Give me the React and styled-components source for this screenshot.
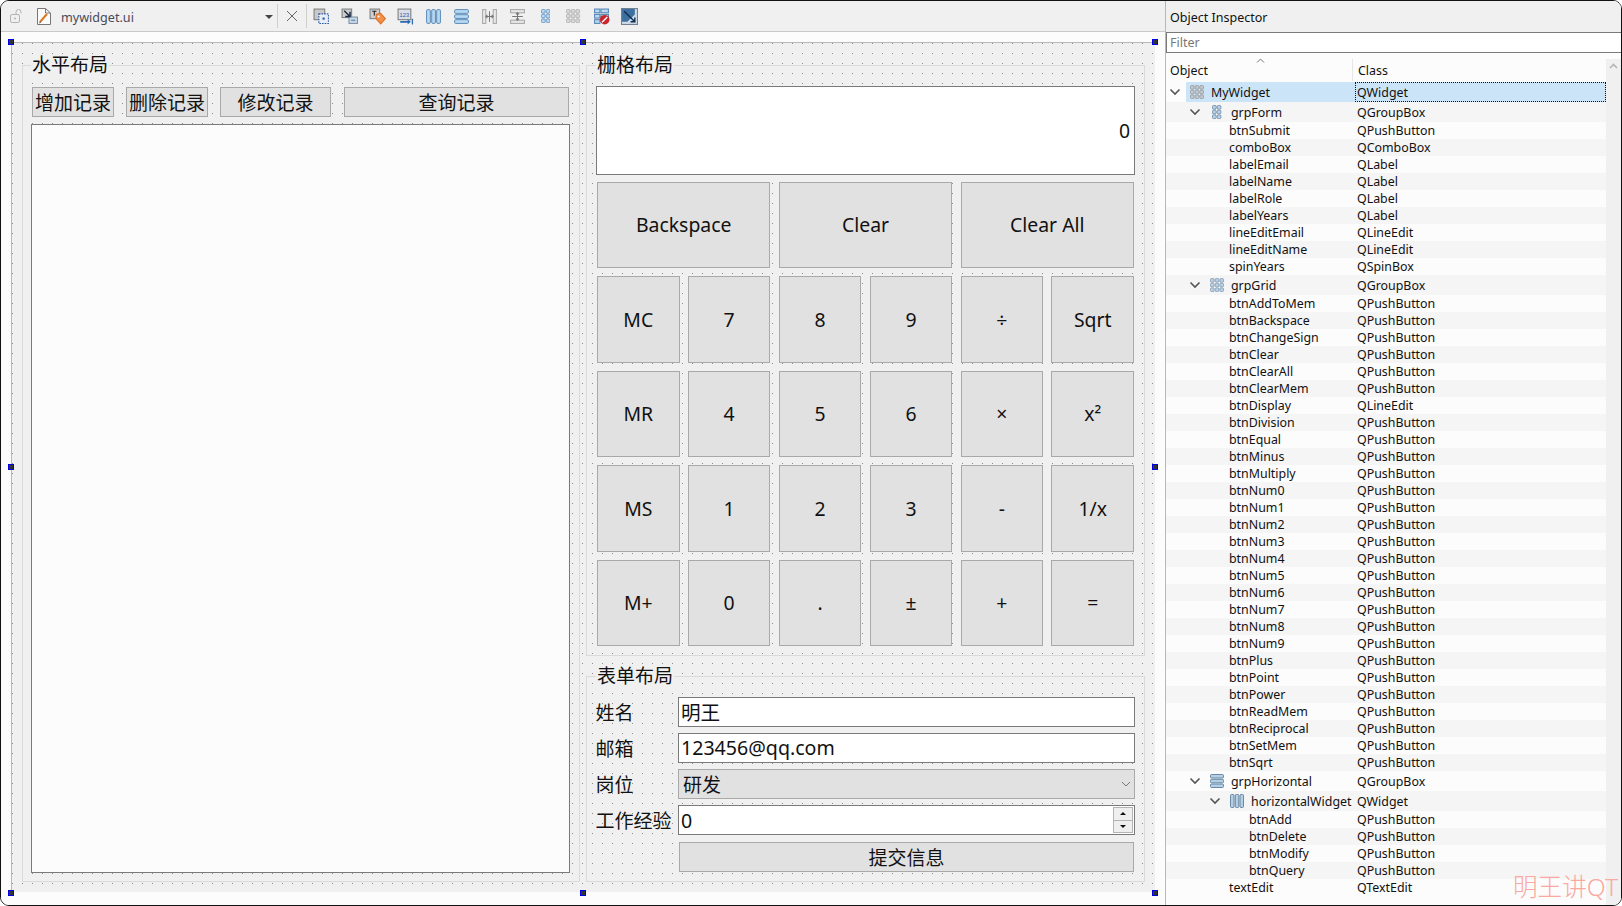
import React from "react"
import styled, { createGlobalStyle } from "styled-components"

const sans = `"Noto Sans", "Noto Sans CJK SC", sans-serif`

const GlobalStyle = createGlobalStyle`
  html, body {
    margin: 0;
    width: 1622px;
    height: 906px;
    overflow: hidden;
    background: #fff;
  }
  * {
    box-sizing: border-box;
  }
`

const Window = styled.div`
  position: relative;
  display: flex;
  width: 1622px;
  height: 906px;
  border: 1px solid #111;
  border-radius: 9px;
  overflow: hidden;
  background: #fcfcfc;
  font-family: ${sans};
  color: #111;
`

const Designer = styled.div`
  display: flex;
  flex-direction: column;
  width: 1164px;
`

const Toolbar = styled.div`
  display: flex;
  align-items: center;
  height: 31px;
  padding-left: 9px;
  background: #f0f0f0;
  border-bottom: 1px solid #c9c9c9;
  flex-shrink: 0;
`

const FileName = styled.div`
  display: flex;
  align-items: center;
  justify-content: space-between;
  width: 212px;
  margin: 0 1px 0 10px;
  padding-top: 3px;
  font-size: 12.6px;
  color: #4a4a5a;
`

const ComboArrow = styled.span`
  width: 0;
  height: 0;
  margin-top: -2px;
  border-left: 4px solid transparent;
  border-right: 4px solid transparent;
  border-top: 4px solid #444;
`

const ToolSep = styled.span`
  width: 1px;
  height: 24px;
  background: #cfcfcf;
  margin: 0 ${(p) => p.$after}px 0 ${(p) => p.$before}px;
`

const ToolIcons = styled.div`
  display: flex;
  gap: 11px;
`

const ToolSlot = styled.span`
  display: flex;
  align-items: center;
  justify-content: center;
  width: 17px;
  height: 17px;
`

const Canvas = styled.div`
  flex: 1;
  padding: 10px 0 0 10px;
  background: #fcfcfc;
`

const Form = styled.div`
  position: relative;
  display: flex;
  gap: 6px;
  width: 1144px;
  height: 850px;
  padding: 22px 10px 11px 10px;
  border-top: 1px solid #b8b8b8;
  border-left: 1px solid #b8b8b8;
  background-color: #f0f0f0;
  background-image: radial-gradient(circle at 0.5px 0.5px, #8c8c8c 0.5px, transparent 0.6px);
  background-size: 10px 10px;
`

const Handle = styled.span`
  position: absolute;
  left: ${(p) => p.$x}px;
  top: ${(p) => p.$y}px;
  width: 6px;
  height: 6px;
  background: #333;
  border: 1px solid #0000e6;
`

const GroupBox = styled.div`
  display: flex;
  flex-direction: column;
  width: ${(p) => p.$w}px;
  height: ${(p) => p.$h}px;
  flex-shrink: 0;
  border: 1px solid #dadada;
  padding: 0 9px;
`

const GroupTitle = styled.div`
  align-self: flex-start;
  height: 22px;
  margin: -12px 0 ${(p) => p.$gap}px ${(p) => p.$left || 0}px;
  padding: 0 1px;
  background: #f0f0f0;
  font-size: 19px;
  line-height: 22px;
  white-space: nowrap;
`

const RightColumn = styled.div`
  display: flex;
  flex-direction: column;
  gap: 20px;
`

const PushButton = styled.button`
  display: block;
  margin: 0;
  padding: 0 0 1px;
  width: ${(p) => (p.$w ? `${p.$w}px` : "auto")};
  height: ${(p) => (p.$h ? `${p.$h}px` : "auto")};
  border: 1px solid #a9a9a9;
  border-radius: 0;
  background: #e1e1e1;
  font-family: ${sans};
  font-size: 19.4px;
  color: #111;
  white-space: nowrap;
  grid-column: span ${(p) => p.$span || 1};
`

const RecordButton = styled(PushButton)`
  font-size: 19px;
  margin-left: ${(p) => p.$offset || 0}px;
`

const ButtonRow = styled.div`
  display: flex;
  gap: 12px;
  margin-bottom: 7px;
`

const TextEdit = styled.div`
  width: 539px;
  height: 749px;
  margin-left: -1px;
  border: 1px solid #7a7a7a;
  background: #fcfcfc;
`

const CalcGrid = styled.div`
  display: grid;
  grid-template-columns: repeat(6, 1fr);
  grid-template-rows: 88px 86px 87px 86px 87px 86px;
  column-gap: 8.4px;
  row-gap: 8px;
  padding: 0 1px;
`

const Display = styled.div`
  grid-column: 1 / -1;
  margin: 0 -1px -1px;
  display: flex;
  align-items: center;
  justify-content: flex-end;
  padding-right: 4px;
  border: 1px solid #7a7a7a;
  background: #fff;
  font-size: 19.4px;
`

const FormGrid = styled.div`
  display: grid;
  grid-template-columns: 82px 1fr;
  grid-auto-rows: 30px;
  row-gap: 6px;
`

const FieldLabel = styled.div`
  display: flex;
  align-items: center;
  margin-left: -0.5px;
  font-size: 19px;
  white-space: nowrap;
`

const LineEdit = styled.div`
  display: flex;
  align-items: center;
  justify-content: space-between;
  padding-left: 2px;
  padding-bottom: ${(p) => p.$lift || 0}px;
  border: 1px solid #7a7a7a;
  background: #fff;
  font-size: 19.6px;
`

const ComboBox = styled.div`
  display: flex;
  align-items: center;
  justify-content: space-between;
  padding: 0 3px 1px 4px;
  border: 1px solid #a9a9a9;
  background: #e1e1e1;
  font-size: 19px;
`

const SpinButtons = styled.div`
  display: flex;
  flex-direction: column;
  width: 20px;
  height: 26px;
  margin-right: 1px;
  border: 1px solid #b4b4b4;
`

const SpinButton = styled.span`
  flex: 1;
  display: flex;
  align-items: center;
  justify-content: center;
  background: #efefef;
  border-top: ${(p) => (p.$down ? "1px solid #b4b4b4" : "none")};

  &::before {
    content: "";
    border-left: 3px solid transparent;
    border-right: 3px solid transparent;
    border-top: ${(p) => (p.$down ? "3px solid #111" : "none")};
    border-bottom: ${(p) => (p.$down ? "none" : "3px solid #111")};
  }
`

const SubmitButton = styled(PushButton)`
  grid-column: 2;
  height: 30px;
  margin: 1px 1px 0;
  padding: 0;
  font-size: 19px;
`

const Inspector = styled.div`
  flex: 1;
  display: flex;
  flex-direction: column;
  border-left: 1px solid #b8b8b8;
  background: #fcfcfc;
`

const InspectorTitle = styled.div`
  display: flex;
  align-items: center;
  height: 31px;
  padding: 2px 0 0 4px;
  background: #f0f0f0;
  font-size: 12.5px;
`

const Filter = styled.div`
  display: flex;
  align-items: center;
  height: 21px;
  padding-left: 3px;
  border: 1px solid #7a7a7a;
  border-right: none;
  background: #fff;
  color: #777;
  font-size: 12.5px;
`

const TreeArea = styled.div`
  flex: 1;
  display: flex;
  padding-top: 6px;
`

const Tree = styled.div`
  width: 440px;
  font-size: 12.4px;
`

const HeaderRow = styled.div`
  position: relative;
  display: flex;
  align-items: center;
  height: 23px;
  padding-bottom: 1px;
`

const HeaderCell = styled.div`
  width: ${(p) => p.$w}px;
  height: 100%;
  display: flex;
  align-items: center;
  padding-left: ${(p) => p.$pad}px;
  border-right: ${(p) => (p.$line ? "1px solid #e6e6e6" : "none")};
`

const SortMark = styled.svg`
  position: absolute;
  left: 90px;
  top: -1px;
`

const Row = styled.div`
  display: flex;
  align-items: center;
  height: ${(p) => (p.$tall ? 20 : 17)}px;
  padding-bottom: ${(p) => (p.$tall ? 0 : 1)}px;
  white-space: nowrap;
  background: ${(p) =>
    p.$selected
      ? "linear-gradient(to right, #fcfcfc 20px, #cce4f7 20px)"
      : p.$alt
      ? "#f5f5f5"
      : "#fcfcfc"};
`

const ObjectCell = styled.div`
  display: flex;
  align-items: center;
  width: 187px;
  flex-shrink: 0;
  padding-left: ${(p) => p.$pad}px;
`

const ClassCell = styled.div`
  flex: 1;
  align-self: stretch;
  display: flex;
  align-items: center;
  margin-left: 2px;
  padding-left: 2px;
  outline: ${(p) => (p.$focus ? "1px dotted #111" : "none")};
  outline-offset: -1px;
`

const Chevron = styled.svg`
  width: 12px;
  flex-shrink: 0;
  margin-right: 9px;
`

const TreeIcon = styled.span`
  display: flex;
  justify-content: center;
  width: 14px;
  margin-right: 7px;
  flex-shrink: 0;
`

const Scrollbar = styled.div`
  flex: 1;
  display: flex;
  justify-content: center;
  padding-top: 4px;
  background: #f0f0f0;
`

const Watermark = styled.div`
  position: absolute;
  right: 3px;
  bottom: 3px;
  font-size: 24.6px;
  font-weight: 300;
  line-height: 30px;
  color: #fba8a0;
  white-space: nowrap;
`

/* toolbar + tree icons */
const DotGrid = ({ cols, rows, color, stroke }) => (
  <svg width={cols * 4.7} height={14} viewBox={`0 0 ${cols * 4.7} 14`}>
    {Array.from({ length: rows * cols }).map((_, i) => (
      <rect
        key={i}
        x={(i % cols) * 4.7 + 0.5}
        y={Math.floor(i / cols) * 4.7 + 0.5}
        width={3.7}
        height={3.7}
        rx={1}
        fill={color}
        stroke={stroke}
        strokeWidth={0.7}
      />
    ))}
  </svg>
)

const HBars = () => (
  <svg width="14" height="14" viewBox="0 0 14 14">
    {[0.5, 5.3, 10].map((y) => (
      <rect key={y} x="0.5" y={y} width="13" height="3.5" rx="1" fill="#b5cfe6" stroke="#5f7f9c" strokeWidth="0.9" />
    ))}
  </svg>
)

const VBars = () => (
  <svg width="14" height="14" viewBox="0 0 14 14">
    {[0.5, 5.3, 10].map((x) => (
      <rect key={x} x={x} y="0.5" width="3.5" height="13" rx="1" fill="#b5cfe6" stroke="#5f7f9c" strokeWidth="0.9" />
    ))}
  </svg>
)

const Tool = ({ children }) => (
  <svg width="17" height="17" viewBox="0 0 16 16">
    {children}
  </svg>
)

const EditWidgetsIcon = () => (
  <Tool>
    <rect x="1" y="1" width="10" height="10" fill="#c9c9c9" stroke="#7d7d7d" />
    <rect x="5.5" y="5.5" width="9" height="9" fill="#e8eef6" stroke="#2c54a8" strokeDasharray="1.5 1" />
    <rect x="9" y="9" width="2" height="2" fill="#2c54a8" />
  </Tool>
)

const SignalsIcon = () => (
  <Tool>
    <rect x="1" y="1" width="9" height="8" fill="#cfcfcf" stroke="#7d7d7d" />
    <rect x="7.5" y="8.5" width="8" height="6" fill="#c9d9ea" stroke="#7f8fa5" />
    <path d="M3 2.5 L8 7.5 M8.5 3.5 V8 H4" fill="none" stroke="#1c2c48" strokeWidth="1.4" />
    <path d="M9.5 11.5 H13.5" stroke="#5079a8" />
  </Tool>
)

const BuddyIcon = () => (
  <Tool>
    <rect x="1" y="1" width="9" height="9" fill="#cfcfcf" stroke="#7d7d7d" />
    <path d="M3 3 H7 M5 3 V7" stroke="#222" />
    <path d="M7 6 L11 5 L15.5 10 L11 15 L6.5 10 Z" fill="#f29145" stroke="#d9702a" />
    <circle cx="9" cy="8" r="1" fill="#fff" />
  </Tool>
)

const TabOrderIcon = () => (
  <Tool>
    <rect x="1" y="1" width="12" height="10" fill="#d8dfe8" stroke="#7d7d7d" />
    <text x="2.4" y="8" fontSize="5.4" fontFamily="Liberation Sans" fill="#2c54a8">
      123
    </text>
    <path d="M3 13 H12" stroke="#2c6ab0" strokeWidth="1.6" />
    <path d="M10 10.5 L13 13 L10 15.5 Z" fill="#2c6ab0" />
    <path d="M14.5 10 V15.5" stroke="#2c6ab0" strokeWidth="1.2" />
  </Tool>
)

const HLayoutIcon = () => (
  <Tool>
    <g transform="translate(1 1)">
      {[0.5, 5.3, 10].map((x) => (
        <rect key={x} x={x} y="0.5" width="3.5" height="13" rx="1" fill="#b9d8f2" stroke="#5586b4" strokeWidth="0.9" />
      ))}
    </g>
  </Tool>
)

const VLayoutIcon = () => (
  <Tool>
    <g transform="translate(1 1)">
      {[0.5, 5.3, 10].map((y) => (
        <rect key={y} x="0.5" y={y} width="13" height="3.5" rx="1" fill="#b9d8f2" stroke="#5586b4" strokeWidth="0.9" />
      ))}
    </g>
  </Tool>
)

const HSplitIcon = () => (
  <Tool>
    <rect x="1.5" y="1.5" width="3" height="13" fill="#e8e8e8" stroke="#a8a8a8" />
    <rect x="11.5" y="1.5" width="3" height="13" fill="#e8e8e8" stroke="#a8a8a8" />
    <path d="M8 3 V13 M5.5 8 H10.5 M6 6.5 L4.5 8 L6 9.5 M10 6.5 L11.5 8 L10 9.5" fill="none" stroke="#777" />
  </Tool>
)

const VSplitIcon = () => (
  <Tool>
    <rect x="1.5" y="1.5" width="13" height="3" fill="#e8e8e8" stroke="#a8a8a8" />
    <rect x="1.5" y="11.5" width="13" height="3" fill="#e8e8e8" stroke="#a8a8a8" />
    <path d="M3 8 H13 M8 5.5 V10.5 M6.5 6 L8 4.5 L9.5 6 M6.5 10 L8 11.5 L9.5 10" fill="none" stroke="#777" />
  </Tool>
)

const BreakLayoutIcon = () => (
  <Tool>
    <rect x="1.5" y="1" width="5" height="3.5" fill="#b9d8f2" stroke="#5586b4" />
    <rect x="7.5" y="1" width="7" height="3.5" fill="#b9d8f2" stroke="#5586b4" />
    <rect x="1.5" y="6" width="5" height="3.5" fill="#b9d8f2" stroke="#5586b4" />
    <rect x="7.5" y="6" width="7" height="3.5" fill="#b9d8f2" stroke="#5586b4" />
    <rect x="1.5" y="11" width="5" height="3.5" fill="#b9d8f2" stroke="#5586b4" />
    <circle cx="11" cy="11" r="4.5" fill="#c8262a" />
    <path d="M8.5 13.5 L13.5 8.5" stroke="#fff" strokeWidth="1.3" />
  </Tool>
)

const AdjustSizeIcon = () => (
  <Tool>
    <rect x="0.5" y="0.5" width="15" height="15" fill="#cfdbe6" stroke="#6f8090" />
    <path d="M1 1 H13 V6 L6 13 H1 Z" fill="#3d6f9f" />
    <path d="M3 3 L13 13 M9 13 H13 V9" fill="none" stroke="#0d2c50" strokeWidth="1.3" />
  </Tool>
)

const LockIcon = () => (
  <svg width="12" height="14" viewBox="0 0 12 14">
    <rect x="0.5" y="5.5" width="9" height="8" rx="1.5" fill="none" stroke="#b5b5b5" />
    <circle cx="5" cy="9.5" r="1" fill="#b5b5b5" />
    <path d="M6 5.5 V3 A2.5 2.5 0 0 1 11 3 V4.5" fill="none" stroke="#b5b5b5" />
  </svg>
)

const DocIcon = () => (
  <svg width="14" height="17" viewBox="0 0 14 17" style={{ marginLeft: 15 }}>
    <path d="M0.5 0.5 H8.5 L13.5 5 V16.5 H0.5 Z" fill="#fbfbfb" stroke="#777" />
    <path d="M8.5 0.5 V5 H13.5" fill="none" stroke="#777" />
    <path d="M3 14 L10 6" stroke="#d97a25" strokeWidth="2" />
    <path d="M2 15.5 L3 13.5 L4 14.5 Z" fill="#444" />
  </svg>
)

const CloseIcon = () => (
  <svg width="12" height="12" viewBox="0 0 12 12">
    <path d="M1 1 L11 11 M11 1 L1 11" stroke="#666" strokeWidth="1" />
  </svg>
)

const ChevronDown = ({ color = "#555", width = 1.6 }) => (
  <Chevron height="8" viewBox="0 0 12 8">
    <path d="M1.5 1.5 L6 6 L10.5 1.5" fill="none" stroke={color} strokeWidth={width} />
  </Chevron>
)

const treeIcons = {
  grid3: <DotGrid cols={3} rows={3} color="#c4c8cc" stroke="#8d9499" />,
  grid2: <DotGrid cols={2} rows={3} color="#b9d0e6" stroke="#5e7f9e" />,
  grid3blue: <DotGrid cols={3} rows={3} color="#b9d0e6" stroke="#7b93a8" />,
  hbars: <HBars />,
  vbars: <VBars />,
}

const nums = Array.from({ length: 10 }, (_, i) => [`btnNum${i}`, "QPushButton"])
const push = (names) => names.map((n) => [n, "QPushButton"])

const treeRows = [
  { name: "MyWidget", cls: "QWidget", depth: 0, icon: "grid3", selected: true },
  { name: "grpForm", cls: "QGroupBox", depth: 1, icon: "grid2" },
  ...[
    ["btnSubmit", "QPushButton"],
    ["comboBox", "QComboBox"],
    ["labelEmail", "QLabel"],
    ["labelName", "QLabel"],
    ["labelRole", "QLabel"],
    ["labelYears", "QLabel"],
    ["lineEditEmail", "QLineEdit"],
    ["lineEditName", "QLineEdit"],
    ["spinYears", "QSpinBox"],
  ].map(([name, cls]) => ({ name, cls, depth: 1 })),
  { name: "grpGrid", cls: "QGroupBox", depth: 1, icon: "grid3blue" },
  ...[
    ...push(["btnAddToMem", "btnBackspace", "btnChangeSign", "btnClear", "btnClearAll", "btnClearMem"]),
    ["btnDisplay", "QLineEdit"],
    ...push(["btnDivision", "btnEqual", "btnMinus", "btnMultiply"]),
    ...nums,
    ...push(["btnPlus", "btnPoint", "btnPower", "btnReadMem", "btnReciprocal", "btnSetMem", "btnSqrt"]),
  ].map(([name, cls]) => ({ name, cls, depth: 1 })),
  { name: "grpHorizontal", cls: "QGroupBox", depth: 1, icon: "hbars" },
  { name: "horizontalWidget", cls: "QWidget", depth: 2, icon: "vbars" },
  ...push(["btnAdd", "btnDelete", "btnModify", "btnQuery"]).map(([name, cls]) => ({ name, cls, depth: 2 })),
  { name: "textEdit", cls: "QTextEdit", depth: 1 },
]

const calcKeys = [
  "MC", "7", "8", "9", "÷", "Sqrt",
  "MR", "4", "5", "6", "×", "x²",
  "MS", "1", "2", "3", "-", "1/x",
  "M+", "0", ".", "±", "+", "=",
]

const TreeRow = ({ row, index }) => {
  const tall = !!row.icon
  return (
    <Row $tall={tall} $alt={index % 2 === 1} $selected={row.selected}>
      <ObjectCell $pad={tall ? 3 + row.depth * 20 : 43 + row.depth * 20}>
        {tall && <ChevronDown />}
        {tall && <TreeIcon>{treeIcons[row.icon]}</TreeIcon>}
        {row.name}
      </ObjectCell>
      <ClassCell $focus={row.selected}>{row.cls}</ClassCell>
    </Row>
  )
}

const App = () => (
  <Window>
    <GlobalStyle />
    <Designer>
      <Toolbar>
        <LockIcon />
        <DocIcon />
        <FileName>
          mywidget.ui
          <ComboArrow />
        </FileName>
        <ToolSep $before={3} $after={8} />
        <CloseIcon />
        <ToolSep $before={8} $after={6} />
        <ToolIcons>
          <EditWidgetsIcon />
          <SignalsIcon />
          <BuddyIcon />
          <TabOrderIcon />
          <HLayoutIcon />
          <VLayoutIcon />
          <HSplitIcon />
          <VSplitIcon />
          <ToolSlot>
            <DotGrid cols={2} rows={3} color="#b9d8f2" stroke="#5586b4" />
          </ToolSlot>
          <ToolSlot>
            <DotGrid cols={3} rows={3} color="#d8d8d8" stroke="#a8a8a8" />
          </ToolSlot>
          <BreakLayoutIcon />
          <AdjustSizeIcon />
        </ToolIcons>
      </Toolbar>
      <Canvas>
        <Form>
          <Handle $x={-4} $y={-4} />
          <Handle $x={568} $y={-4} />
          <Handle $x={1140} $y={-4} />
          <Handle $x={-4} $y={421} />
          <Handle $x={1140} $y={421} />
          <Handle $x={-4} $y={847} />
          <Handle $x={568} $y={847} />
          <Handle $x={1140} $y={847} />

          <GroupBox $w={558} $h={817}>
            <GroupTitle $gap={11} $left={-1}>水平布局</GroupTitle>
            <ButtonRow>
              <RecordButton $w={82} $h={30}>增加记录</RecordButton>
              <RecordButton $w={82} $h={30}>删除记录</RecordButton>
              <RecordButton $w={111} $h={30}>修改记录</RecordButton>
              <RecordButton $w={225} $h={30} $offset={1}>查询记录</RecordButton>
            </ButtonRow>
            <TextEdit />
          </GroupBox>

          <RightColumn>
            <GroupBox $w={559} $h={591}>
              <GroupTitle $gap={10}>栅格布局</GroupTitle>
              <CalcGrid>
                <Display>0</Display>
                <PushButton $span={2}>Backspace</PushButton>
                <PushButton $span={2}>Clear</PushButton>
                <PushButton $span={2}>Clear All</PushButton>
                {calcKeys.map((k) => (
                  <PushButton key={k}>{k}</PushButton>
                ))}
              </CalcGrid>
            </GroupBox>
            <GroupBox $w={559} $h={206}>
              <GroupTitle $gap={10}>表单布局</GroupTitle>
              <FormGrid>
                <FieldLabel>姓名</FieldLabel>
                <LineEdit $lift={2}>明王</LineEdit>
                <FieldLabel>邮箱</FieldLabel>
                <LineEdit $lift={2}>123456@qq.com</LineEdit>
                <FieldLabel>岗位</FieldLabel>
                <ComboBox>
                  研发
                  <svg width="10" height="6" viewBox="0 0 10 6">
                    <path d="M1 1 L5 5 L9 1" fill="none" stroke="#777" />
                  </svg>
                </ComboBox>
                <FieldLabel>工作经验</FieldLabel>
                <LineEdit>
                  0
                  <SpinButtons>
                    <SpinButton />
                    <SpinButton $down />
                  </SpinButtons>
                </LineEdit>
                <SubmitButton>提交信息</SubmitButton>
              </FormGrid>
            </GroupBox>
          </RightColumn>
        </Form>
      </Canvas>
    </Designer>

    <Inspector>
      <InspectorTitle>Object Inspector</InspectorTitle>
      <Filter>Filter</Filter>
      <TreeArea>
        <Tree>
          <HeaderRow>
            <SortMark width="9" height="5" viewBox="0 0 9 5">
              <path d="M1 4.5 L4.5 1 L8 4.5" fill="none" stroke="#777" />
            </SortMark>
            <HeaderCell $w={187} $pad={4} $line>Object</HeaderCell>
            <HeaderCell $w={200} $pad={5}>Class</HeaderCell>
          </HeaderRow>
          {treeRows.map((row, i) => (
            <TreeRow key={row.name} row={row} index={i} />
          ))}
        </Tree>
        <Scrollbar>
          <svg width="9" height="6" viewBox="0 0 9 6">
            <path d="M1 5 L4.5 1.5 L8 5" fill="none" stroke="#b5b5b5" strokeWidth="1.6" />
          </svg>
        </Scrollbar>
      </TreeArea>
    </Inspector>
    <Watermark>明王讲QT</Watermark>
  </Window>
)

export default App
